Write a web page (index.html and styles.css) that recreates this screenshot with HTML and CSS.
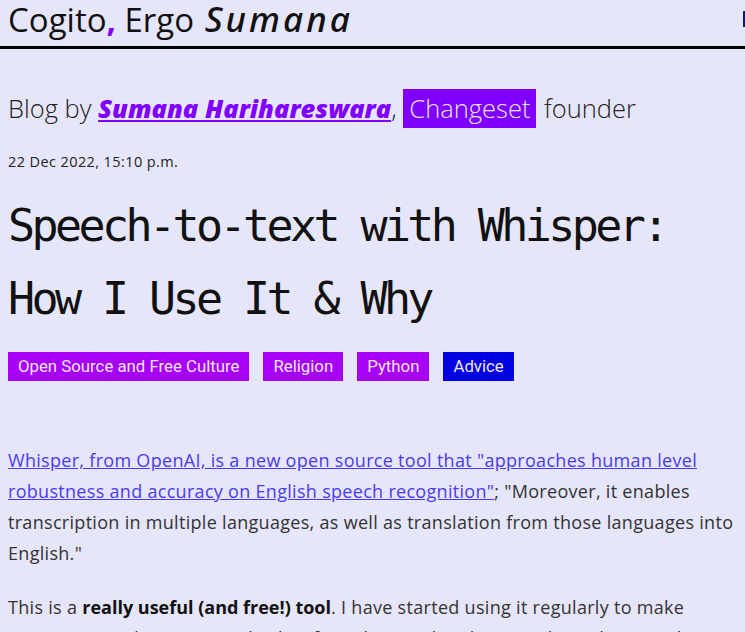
FILE: index.html
```html
<!DOCTYPE html>
<html lang="en">
<head>
<meta charset="utf-8">
<title>Speech-to-text with Whisper: How I Use It &amp; Why</title>
<link rel="stylesheet" href="styles.css">
</head>
<body>
<header class="site-header">
  <div class="site-title">Cogito<span class="comma">,</span> Ergo <em class="name">Sumana</em></div>
  <span class="menu-edge"></span>
</header>
<main class="content">
  <p class="byline">Blog by <a class="author" href="#">Sumana Harihareswara</a>, <span class="org">Changeset</span> founder</p>
  <p class="date">22 Dec 2022, 15:10 p.m.</p>
  <h1 class="post-title">Speech-to-text with Whisper: How I Use It &amp; Why</h1>
  <ul class="tags">
    <li class="tag">Open Source and Free Culture</li>
    <li class="tag">Religion</li>
    <li class="tag">Python</li>
    <li class="tag tag-blue">Advice</li>
  </ul>
  <div class="post-body">
    <p><a class="link" href="#">Whisper, from OpenAI, is a new open source tool that "approaches human level robustness and accuracy on English speech recognition"</a>; "Moreover, it enables transcription in multiple languages, as well as translation from those languages into English."</p>
    <p>This is a <strong>really useful (and free!) tool</strong>. I have started using it regularly to make transcripts and captions (subtitles) for videos and audio recordings that people have made available.</p>
  </div>
</main>
</body>
</html>
```
FILE: styles.css
```css
html, body {
  margin: 0;
  padding: 0;
  background: #e6e6fa;
  color: #333;
  font-family: "Open Sans", "Noto Sans", sans-serif;
}

.site-header {
  height: 46px;
  border-bottom: 3px solid #000;
  padding: 0 8px;
  display: flex;
  align-items: flex-start;
  position: relative;
}

.site-title {
  font-family: "Open Sans", sans-serif;
  font-size: 33px;
  line-height: 38px;
  color: #111;
  white-space: nowrap;
}

.comma {
  color: #7f00ff;
  font-weight: 700;
}

.name {
  font-family: "Noto Sans", sans-serif;
  font-style: italic;
  font-weight: 500;
  font-size: 35px;
  letter-spacing: 3px;
  margin-left: 2px;
}

.menu-edge {
  position: absolute;
  right: 0;
  top: 11px;
  width: 2px;
  height: 16px;
  background: #1a1a5a;
}

.content {
  padding: 0 8px;
}

.byline {
  margin: 40px 0 0;
  font-size: 25.5px;
  line-height: 39px;
  font-weight: 300;
  color: #222;
}

.author {
  color: #7f00ff;
  font-weight: 800;
  font-style: italic;
  text-decoration: underline;
}

.org {
  display: inline-block;
  background: #7f00ff;
  color: #e6e6fa;
  padding: 0 6px;
  margin-right: 1px;
}

.date {
  margin: 25px 0 0;
  font-size: 14.5px;
  letter-spacing: 0.4px;
  line-height: 18px;
  color: #222;
}

.post-title {
  margin: 18px 0 0;
  font-family: "DejaVu Sans Mono", monospace;
  font-weight: 400;
  font-size: 45px;
  letter-spacing: -3.6px;
  line-height: 73px;
  color: #111;
}

.tags {
  list-style: none;
  margin: 17px 0 0;
  padding: 0;
  display: flex;
  gap: 14px;
}

.tag {
  background: #a600f5;
  color: #f3e6ff;
  font-family: "Roboto", "Open Sans", sans-serif;
  font-size: 16.8px;
  line-height: 29px;
  padding: 0 10px;
}

.tag-blue {
  background: #0000e0;
}

.post-body {
  margin-top: 64px;
  font-size: 18px;
  letter-spacing: 0.3px;
  line-height: 31px;
  font-weight: 400;
  color: #333;
}

.post-body p {
  margin: 0 0 23px;
}

.link {
  color: #4b3af0;
  text-decoration: underline;
}

.post-body strong {
  font-weight: 700;
  color: #111;
  letter-spacing: 0;
}
```
